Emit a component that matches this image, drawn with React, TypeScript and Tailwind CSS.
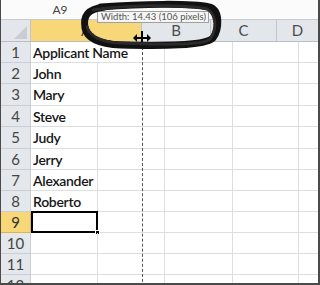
import React from "react";

const names = ["Applicant Name", "John", "Mary", "Steve", "Judy", "Jerry", "Alexander", "Roberto", "", "", "", ""];
const heights = [21, 21, 22, 21, 22, 21, 21, 21, 21, 21, 21, 21];

export default function App() {
  return (
    <div
      className="relative w-[320px] h-[285px] overflow-hidden bg-white border-l border-r-2 border-b-2 border-[#4a4a4a]"
      style={{ fontFamily: "Lato, 'Open Sans', sans-serif" }}
    >
      {/* name box bar */}
      <div className="flex h-[20px] border-b border-[#c6cbd1] bg-[#fbfbfb]">
        <div className="w-[118px] flex items-center justify-center text-[12px] text-[#444]">A9</div>
        <div className="flex-1" />
      </div>
      {/* column headers */}
      <div className="flex h-[22px] bg-[#e3e6ea] border-b border-[#b9bec5] text-[15px] text-[#4c4c4c]">
        <div className="w-[30px] relative border-r border-[#c0c5cc]">
          <svg width="30" height="22" className="absolute left-0 top-0">
            <polygon points="26,6 26,19 13,19" fill="#c9ccd1" />
          </svg>
        </div>
        <div className="w-[111px] bg-[#f7d777] flex items-center justify-center border-r border-[#c0c5cc]">A</div>
        <div className="w-[69px] flex items-center justify-center border-r border-[#c0c5cc]">B</div>
        <div className="w-[66px] flex items-center justify-center border-r border-[#c0c5cc]">C</div>
        <div className="flex-1 flex items-center justify-center">D</div>
      </div>
      {/* body */}
      <div className="flex flex-col">
        {names.map((n, i) => {
          const sel = i === 8;
          return (
            <div key={i} className="flex" style={{ height: heights[i] }}>
              <div
                className={`w-[30px] flex items-center justify-center text-[15px] border-b border-r ${
                  sel ? "bg-[#f7d777] border-[#d9b454] text-[#333]" : "bg-[#e4e7eb] border-[#c9ced4] text-[#444]"
                }`}
              >
                {i + 1}
              </div>
              <div
                className={`relative w-[67px] border-b border-[#dcdee0] flex items-center pl-[2px] text-[14px] font-semibold tracking-[-0.3px] text-[#161616] whitespace-nowrap overflow-visible z-10 ${
                  i === 0 ? "" : "border-r"
                }`}
              >
                {n}
                {sel && (
                  <div className="absolute left-0 top-[-1px] w-[67px] h-[22px] border-2 border-black">
                    <div className="absolute right-[-4px] bottom-[-4px] w-[5px] h-[5px] bg-black border border-white" />
                  </div>
                )}
              </div>
              <div className="w-[67px] border-b border-r border-[#dcdee0]" />
              <div className="w-[68px] border-b border-r border-[#dcdee0]" />
              <div className="w-[66px] border-b border-r border-[#dcdee0]" />
              <div className="flex-1 border-b border-[#dcdee0]" />
            </div>
          );
        })}
      </div>

      {/* dashed drag line */}
      <div className="absolute left-[141px] top-[42px] h-[245px] border-l border-dashed border-[#555] z-20" />

      {/* tooltip */}
      <div className="absolute left-[96px] top-[11px] w-[112px] h-[12px] bg-[#f5f5f5] border border-[#a0a0a0] text-[9.5px] leading-[10px] text-[#555] pl-[3px] whitespace-nowrap z-20">
        Width: 14.43 (106 pixels)
      </div>

      {/* resize cursor */}
      <svg className="absolute left-[132px] top-[30px] z-30" width="18" height="16" viewBox="0 0 18 16">
        <rect x="8" y="1" width="2" height="14" fill="#000" />
        <rect x="2" y="7" width="14" height="2" fill="#000" />
        <polygon points="0,8 4,4 4,12" fill="#000" />
        <polygon points="18,8 14,4 14,12" fill="#000" />
      </svg>

      {/* marker ring */}
      <svg className="absolute left-0 top-0 z-40 pointer-events-none" width="320" height="60">
        <path
          d="M100 7 C 140 4, 190 3, 208 7 C 220 10, 218 30, 212 38 C 204 46, 160 46, 120 45 C 96 44, 86 38, 84 28 C 82 16, 86 9, 104 7"
          fill="none"
          stroke="#111"
          strokeWidth="7"
          strokeLinecap="round"
        />
        <path
          d="M92 10 C 130 4, 190 5, 206 9 C 216 14, 216 32, 208 40 C 196 46, 150 44, 118 43 C 100 42, 88 36, 86 26"
          fill="none"
          stroke="#2a2a2a"
          strokeWidth="3"
          strokeDasharray="2 1"
          strokeLinecap="round"
        />
      </svg>
    </div>
  );
}
